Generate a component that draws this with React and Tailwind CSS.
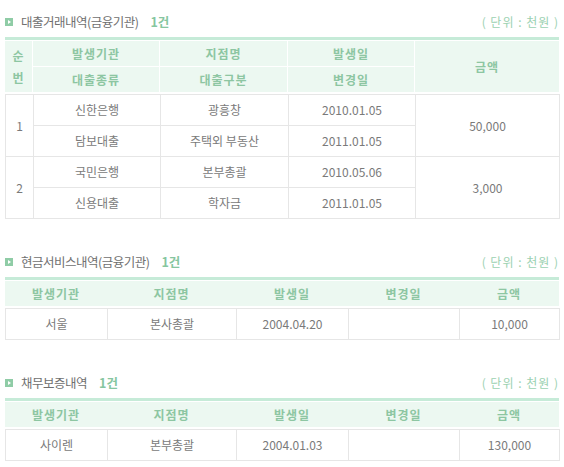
import React from "react";

const font = "font-['Noto_Sans_CJK_KR','Noto_Sans',sans-serif]";

function Title({ text, mt }) {
  return (
    <div className={`flex items-center justify-between h-[16px] ${mt}`}>
      <div className="flex items-center">
        <svg width="8" height="8" viewBox="0 0 8 8" className="mr-[8px]">
          <rect width="8" height="8" fill="#8fcca6" />
          <path d="M3 2 L6 4 L3 6 Z" fill="#ffffff" />
        </svg>
        <span className="text-[12.5px] text-[#707070] tracking-[-0.5px]">{text}</span>
        <span className="ml-[12px] text-[12.5px] font-bold text-[#86c6a0]">1건</span>
      </div>
      <span className="text-[12px] text-[#9bd1b1] tracking-[1px] whitespace-pre">( 단위 : 천원 )</span>
    </div>
  );
}

const hd = "bg-[#ecf8f1] flex items-center justify-center text-[12px] font-bold text-[#8dc6a2] tracking-[1px]";
const td = "border border-[#e6e6e6] text-center text-[12px] text-[#7a7a7a] p-0";

function Section1() {
  return (
    <div>
      <Title text="대출거래내역(금융기관)" mt="" />
      <div className="mt-[7px] h-[3px] bg-[#c6ebd8]" />
      <div className="mt-px grid grid-cols-[27px_126px_127px_126px_144px] grid-rows-[25px_25px] gap-px">
        <div className={`${hd} row-span-2 flex-col leading-[22px]`}>
          <span>순</span>
          <span>번</span>
        </div>
        <div className={hd}>발생기관</div>
        <div className={hd}>지점명</div>
        <div className={hd}>발생일</div>
        <div className={`${hd} row-span-2`}>금액</div>
        <div className={hd}>대출종류</div>
        <div className={hd}>대출구분</div>
        <div className={hd}>변경일</div>
      </div>
      <table className="mt-[2px] w-full table-fixed border-collapse">
        <colgroup>
          <col className="w-[28px]" />
          <col className="w-[127px]" />
          <col className="w-[128px]" />
          <col className="w-[127px]" />
          <col className="w-[144px]" />
        </colgroup>
        <tbody>
          <tr className="h-[31px]">
            <td className={td} rowSpan={2}>1</td>
            <td className={td}>신한은행</td>
            <td className={td}>광흥창</td>
            <td className={td}>2010.01.05</td>
            <td className={td} rowSpan={2}>50,000</td>
          </tr>
          <tr className="h-[31px]">
            <td className={td}>담보대출</td>
            <td className={td}>주택외 부동산</td>
            <td className={td}>2011.01.05</td>
          </tr>
          <tr className="h-[31px]">
            <td className={td} rowSpan={2}>2</td>
            <td className={td}>국민은행</td>
            <td className={td}>본부총괄</td>
            <td className={td}>2010.05.06</td>
            <td className={td} rowSpan={2}>3,000</td>
          </tr>
          <tr className="h-[31px]">
            <td className={td}>신용대출</td>
            <td className={td}>학자금</td>
            <td className={td}>2011.01.05</td>
          </tr>
        </tbody>
      </table>
    </div>
  );
}

function SimpleSection({ title, row }) {
  const heads = ["발생기관", "지점명", "발생일", "변경일", "금액"];
  return (
    <div>
      <Title text={title} mt="mt-[35px]" />
      <div className="mt-[7px] h-[3px] bg-[#c6ebd8]" />
      <div className="mt-px grid grid-cols-[102px_129px_112px_111px_100px] h-[25px] bg-[#ecf8f1]">
        {heads.map((h) => (
          <div key={h} className={hd}>{h}</div>
        ))}
      </div>
      <table className="mt-[2px] w-full table-fixed border-collapse">
        <colgroup>
          <col className="w-[102px]" />
          <col className="w-[129px]" />
          <col className="w-[112px]" />
          <col className="w-[111px]" />
          <col className="w-[100px]" />
        </colgroup>
        <tbody>
          <tr className="h-[31px]">
            {row.map((c, i) => (
              <td key={i} className={td}>{c}</td>
            ))}
          </tr>
        </tbody>
      </table>
    </div>
  );
}

export default function App() {
  return (
    <div className={`${font} w-[564px] h-[467px] bg-white px-[5px] pt-[14px] overflow-hidden`}>
      <Section1 />
      <SimpleSection title="현금서비스내역(금융기관)" row={["서울", "본사총괄", "2004.04.20", "", "10,000"]} />
      <SimpleSection title="채무보증내역" row={["사이렌", "본부총괄", "2004.01.03", "", "130,000"]} />
    </div>
  );
}
